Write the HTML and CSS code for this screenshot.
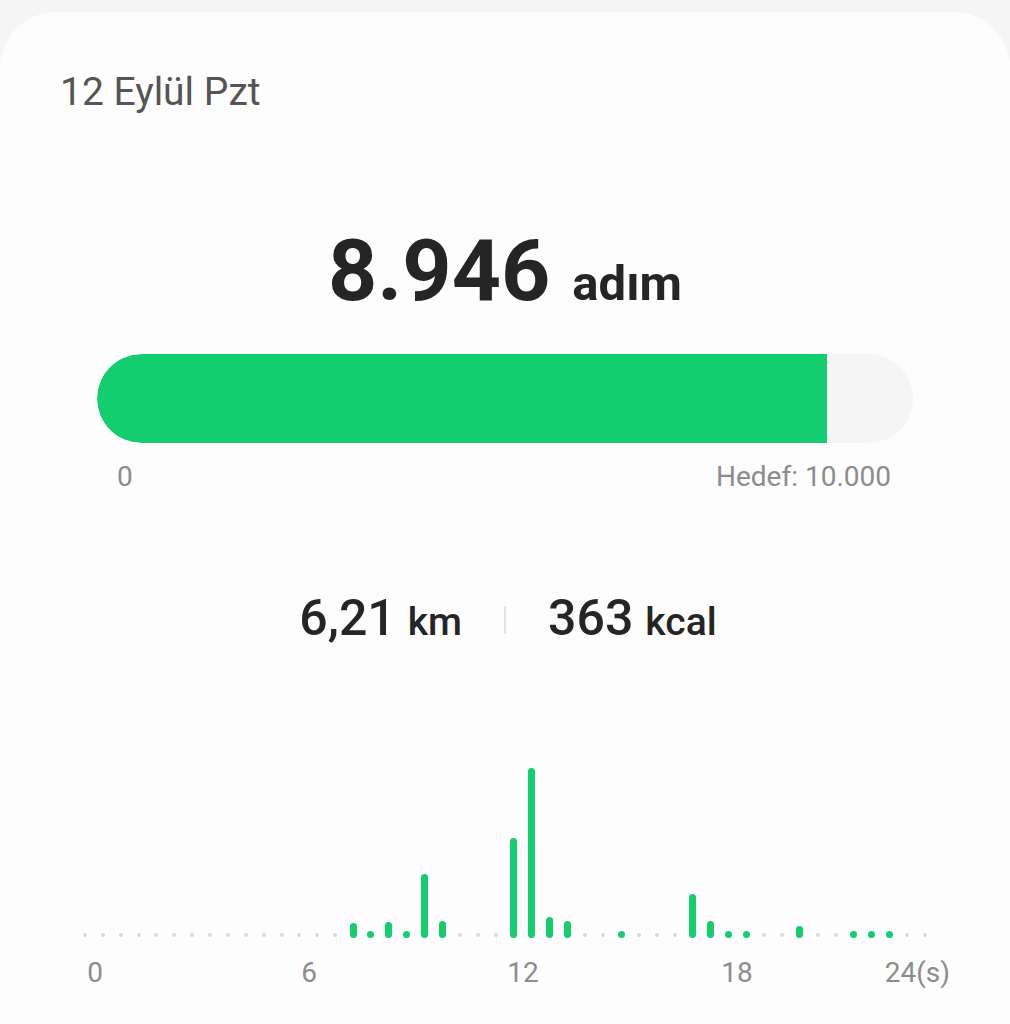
FILE: index.html
```html
<!DOCTYPE html>
<html lang="tr">
<head>
  <meta charset="UTF-8" />
  <meta name="viewport" content="width=device-width, initial-scale=1.0"/>
  <title>Adımlar</title>
  <link rel="stylesheet" href="styles.css">
</head>
<body>
  <div class="card">
    <div class="date">12 Eylül Pzt</div>

    <div class="total">
      <span class="total-num">8.946</span>
      <span class="total-unit">adım</span>
    </div>

    <div class="track">
      <div class="fill" style="width: 89.46%"></div>
    </div>
    <div class="track-labels">
      <span>0</span>
      <span>Hedef: 10.000</span>
    </div>

    <div class="stats">
      <div class="stat"><span class="stat-num">6,21</span><span class="stat-unit">km</span></div>
      <div class="sep"></div>
      <div class="stat"><span class="stat-num">363</span><span class="stat-unit">kcal</span></div>
    </div>

    <!-- 48 half-hour slots -->
    <div class="chart">
      <div class="col"><i class="dot"></i></div>
      <div class="col"><i class="dot"></i></div>
      <div class="col"><i class="dot"></i></div>
      <div class="col"><i class="dot"></i></div>
      <div class="col"><i class="dot"></i></div>
      <div class="col"><i class="dot"></i></div>
      <div class="col"><i class="dot"></i></div>
      <div class="col"><i class="dot"></i></div>
      <div class="col"><i class="dot"></i></div>
      <div class="col"><i class="dot"></i></div>
      <div class="col"><i class="dot"></i></div>
      <div class="col"><i class="dot"></i></div>
      <div class="col"><i class="dot"></i></div>
      <div class="col"><i class="dot"></i></div>
      <div class="col"><i class="dot"></i></div>
      <div class="col"><i class="bar" style="height:15px"></i></div>
      <div class="col"><i class="bar" style="height:7px"></i></div>
      <div class="col"><i class="bar" style="height:16px"></i></div>
      <div class="col"><i class="bar" style="height:7px"></i></div>
      <div class="col"><i class="bar" style="height:64px"></i></div>
      <div class="col"><i class="bar" style="height:17px"></i></div>
      <div class="col"><i class="dot"></i></div>
      <div class="col"><i class="dot"></i></div>
      <div class="col"><i class="dot"></i></div>
      <div class="col"><i class="bar" style="height:100px"></i></div>
      <div class="col"><i class="bar" style="height:170px"></i></div>
      <div class="col"><i class="bar" style="height:21px"></i></div>
      <div class="col"><i class="bar" style="height:17px"></i></div>
      <div class="col"><i class="dot"></i></div>
      <div class="col"><i class="dot"></i></div>
      <div class="col"><i class="bar" style="height:7px"></i></div>
      <div class="col"><i class="dot"></i></div>
      <div class="col"><i class="dot"></i></div>
      <div class="col"><i class="dot"></i></div>
      <div class="col"><i class="bar" style="height:44px"></i></div>
      <div class="col"><i class="bar" style="height:17px"></i></div>
      <div class="col"><i class="bar" style="height:7px"></i></div>
      <div class="col"><i class="bar" style="height:7px"></i></div>
      <div class="col"><i class="dot"></i></div>
      <div class="col"><i class="dot"></i></div>
      <div class="col"><i class="bar" style="height:12px"></i></div>
      <div class="col"><i class="dot"></i></div>
      <div class="col"><i class="dot"></i></div>
      <div class="col"><i class="bar" style="height:7px"></i></div>
      <div class="col"><i class="bar" style="height:7px"></i></div>
      <div class="col"><i class="bar" style="height:7px"></i></div>
      <div class="col"><i class="dot"></i></div>
      <div class="col"><i class="dot"></i></div>
    </div>
    <div class="axis">
      <span>0</span>
      <span>6</span>
      <span>12</span>
      <span>18</span>
      <span class="axis-end">24(s)</span>
    </div>
  </div>
</body>
</html>
```

FILE: styles.css
```css
* {
  box-sizing: border-box;
}

body {
  font-family: Roboto, 'Liberation Sans', sans-serif;
  background: #f5f5f5;
  margin: 0;
  padding: 0;
}

.card {
  margin-top: 12px;
  min-height: 1012px;
  background: #fdfdfd;
  border-radius: 56px 56px 0 0;
  padding-top: 61px;
}

.date {
  font-size: 39px;
  line-height: 39px;
  color: #555;
  padding-left: 60px;
}

.total {
  margin-top: 116px;
  display: flex;
  justify-content: center;
  align-items: baseline;
  color: #252525;
  font-weight: 700;
}

.total-num {
  font-size: 86px;
  line-height: 86px;
}

.total-unit {
  font-size: 49px;
  line-height: 49px;
  margin-left: 22px;
}

.track {
  margin: 40px 97px 0;
  height: 89px;
  background: #f5f5f5;
  border-radius: 45px;
  overflow: hidden;
}

.fill {
  height: 100%;
  background: #13cd6f;
  border-radius: 45px 0 0 45px;
}

.track-labels {
  margin: 20px 97px 0;
  padding: 0 22px 0 20px;
  display: flex;
  justify-content: space-between;
  font-size: 28px;
  line-height: 28px;
  color: #8c8c8c;
}

.stats {
  margin-top: 102px;
  padding-left: 6px;
  display: flex;
  justify-content: center;
  align-items: center;
  gap: 42px;
  color: #252525;
}

.stat {
  display: flex;
  align-items: baseline;
}

.stat-num {
  font-size: 50px;
  line-height: 51px;
  font-weight: 500;
}

.stat-unit {
  font-size: 39px;
  line-height: 39px;
  font-weight: 500;
  margin-left: 12px;
}

.sep {
  width: 2px;
  height: 28px;
  background: #e2e2e2;
  margin-top: 2px;
}

.chart {
  margin: 124px 76px 0;
  height: 170px;
  display: grid;
  grid-template-columns: repeat(48, 1fr);
}

.col {
  display: flex;
  flex-direction: column;
  justify-content: flex-end;
  align-items: center;
}

.dot {
  width: 4px;
  height: 4px;
  border-radius: 50%;
  background: #d9d9d9;
  margin-bottom: 1px;
}

.bar {
  width: 7px;
  border-radius: 4px;
  background: #13cd6f;
}

.axis {
  margin-top: 21px;
  padding: 0 60px 0 75px;
  display: flex;
  font-size: 28px;
  line-height: 28px;
  color: #8c8c8c;
}

.axis span {
  width: 40px;
  text-align: center;
}

.axis span + span {
  margin-left: 174px;
}

.axis .axis-end {
  width: auto;
  margin-left: auto;
}
```
